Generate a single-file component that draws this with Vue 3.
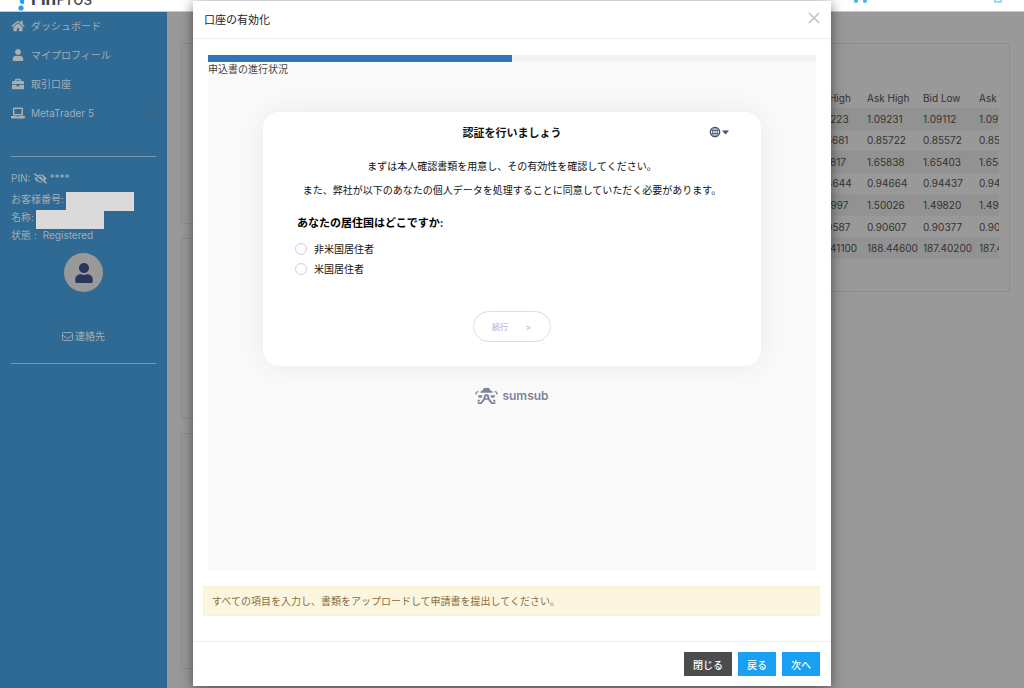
<script setup>
import { ref } from 'vue'

const navItems = [
  { label: 'ダッシュボード', icon: 'home' },
  { label: 'マイプロフィール', icon: 'user' },
  { label: '取引口座', icon: 'briefcase' },
  { label: 'MetaTrader 5', icon: 'laptop', more: true }
]

const columns = ['Bid High', 'Ask High', 'Bid Low', 'Ask Low']
const rates = [
  ['1.09223', '1.09231', '1.09112', '1.09121'],
  ['0.85681', '0.85722', '0.85572', '0.85583'],
  ['1.65817', '1.65838', '1.65403', '1.65442'],
  ['0.94644', '0.94664', '0.94437', '0.94452'],
  ['1.49997', '1.50026', '1.49820', '1.49818'],
  ['0.90587', '0.90607', '0.90377', '0.90392'],
  ['188.41100', '188.44600', '187.40200', '187.44000']
]

const progress = 50
const residence = ref('')
</script>

<template>
  <div class="page">
    <header class="topbar">
      <a class="logo" href="#" aria-label="FinPros">
        <svg class="logo-mark" width="12" height="18" viewBox="0 0 12 18" aria-hidden="true">
          <path d="M3 0h6l-1 10q-2 3-4-1z" fill="#1f9ff0" />
          <circle cx="5" cy="15" r="2.6" fill="#1f9ff0" />
        </svg>
        <span class="logo-text"><b>Fin</b>Pros</span>
      </a>
      <div class="top-icons">
        <svg width="16" height="14" viewBox="0 0 16 14" aria-hidden="true">
          <path d="M0 0h3l2 8h8l2-6H4" fill="none" stroke="#45b5ea" stroke-width="2" />
          <circle cx="3" cy="12" r="2" fill="#45b5ea" />
          <circle cx="12" cy="12" r="2" fill="#45b5ea" />
        </svg>
        <svg width="8" height="14" viewBox="0 0 8 14" aria-hidden="true">
          <rect x="1" y="1" width="6" height="12" fill="none" stroke="#45b5ea" />
        </svg>
      </div>
    </header>

    <div class="columns">
      <aside class="sidebar">
        <nav>
          <a v-for="item in navItems" :key="item.label" class="nav-link" href="#">
            <svg v-if="item.icon === 'home'" class="nav-icon" viewBox="0 0 576 512" aria-hidden="true"><path d="M280.37 148.26L96 300.11V464a16 16 0 0 0 16 16l112.06-.29a16 16 0 0 0 15.92-16V368a16 16 0 0 1 16-16h64a16 16 0 0 1 16 16v95.64a16 16 0 0 0 16 16.05L464 480a16 16 0 0 0 16-16V300L295.67 148.26a12.19 12.19 0 0 0-15.3 0zM571.6 251.47L488 182.56V44.05a12 12 0 0 0-12-12h-56a12 12 0 0 0-12 12v72.61L318.47 43a48 48 0 0 0-61 0L4.34 251.47a12 12 0 0 0-1.6 16.9l25.5 31A12 12 0 0 0 45.15 301l235.22-193.74a12.19 12.19 0 0 1 15.3 0L530.9 301a12 12 0 0 0 16.9-1.6l25.5-31a12 12 0 0 0-1.7-16.93z" /></svg>
            <svg v-else-if="item.icon === 'user'" class="nav-icon" viewBox="0 0 448 512" aria-hidden="true"><path d="M224 256c70.7 0 128-57.3 128-128S294.7 0 224 0 96 57.3 96 128s57.3 128 128 128zm89.6 32h-16.7c-22.2 10.2-46.9 16-72.9 16s-50.6-5.8-72.9-16h-16.7C60.2 288 0 348.2 0 422.4V464c0 26.5 21.5 48 48 48h352c26.5 0 48-21.5 48-48v-41.6c0-74.2-60.2-134.4-134.4-134.4z" /></svg>
            <svg v-else-if="item.icon === 'briefcase'" class="nav-icon" viewBox="0 0 512 512" aria-hidden="true"><path d="M320 336c0 8.84-7.16 16-16 16h-96c-8.84 0-16-7.16-16-16v-48H0v144c0 25.6 22.4 48 48 48h416c25.6 0 48-22.4 48-48V288H320v48zm144-208h-80V80c0-25.6-22.4-48-48-48H176c-25.6 0-48 22.4-48 48v48H48c-25.6 0-48 22.4-48 48v80h512v-80c0-25.6-22.4-48-48-48zm-144 0H192V96h128v32z" /></svg>
            <svg v-else class="nav-icon" viewBox="0 0 28 24" aria-hidden="true"><path fill-rule="evenodd" d="M6 1h16q2 0 2 2v14H4V3q0-2 2-2zm1 3v10h14V4zM0 18h10l1 1h6l1-1h10v2q0 3-2 3H2q-2 0-2-3z" /></svg>
            <span>{{ item.label }}</span>
            <svg v-if="item.more" class="nav-more" width="5" height="8" viewBox="0 0 5 8" aria-hidden="true"><path d="M4 1L1 4l3 3" fill="none" stroke="#4d5f72" stroke-width="2" /></svg>
          </a>
        </nav>

        <section class="account">
          <p class="pin">
            PIN:
            <svg width="13" height="11" viewBox="0 0 640 512" aria-hidden="true"><path d="M320 400c-75.85 0-137.25-58.71-142.9-133.11L72.2 185.82c-13.79 17.3-26.48 35.59-36.72 55.59a32.35 32.35 0 0 0 0 29.19C89.71 376.41 197.07 448 320 448c26.91 0 52.87-4 77.89-10.46L346 397.39a144.13 144.13 0 0 1-26 2.61zm313.82 58.1l-110.55-85.44a331.25 331.25 0 0 0 81.25-102.07 32.35 32.35 0 0 0 0-29.19C550.29 135.59 442.93 64 320 64a308.15 308.15 0 0 0-147.32 37.7L45.46 3.37A16 16 0 0 0 23 6.18L3.37 31.45A16 16 0 0 0 6.18 53.9l588.36 454.73a16 16 0 0 0 22.46-2.81l19.64-25.27a16 16 0 0 0-2.82-22.45zm-183.72-142l-39.3-30.38A94.75 94.75 0 0 0 416 256a94.76 94.76 0 0 0-121.31-92.21A47.65 47.65 0 0 1 304 192a46.64 46.64 0 0 1-1.54 10l-73.61-56.89A142.31 142.31 0 0 1 320 112a143.92 143.92 0 0 1 144 144c0 21.63-5.29 41.79-13.9 60.11z" /></svg>
            <span>****</span>
          </p>
          <p>お客様番号:<i class="mask"></i></p>
          <p>名称:<i class="mask"></i></p>
          <p class="status"><span>状態 :</span><span>Registered</span></p>
          <div class="avatar">
            <svg width="18" height="20" viewBox="0 0 448 512" aria-hidden="true"><path d="M224 256c70.7 0 128-57.3 128-128S294.7 0 224 0 96 57.3 96 128s57.3 128 128 128zm89.6 32h-16.7c-22.2 10.2-46.9 16-72.9 16s-50.6-5.8-72.9-16h-16.7C60.2 288 0 348.2 0 422.4V464c0 26.5 21.5 48 48 48h352c26.5 0 48-21.5 48-48v-41.6c0-74.2-60.2-134.4-134.4-134.4z" /></svg>
          </div>
          <a class="contact" href="#">
            <svg width="11" height="9" viewBox="0 0 22 18" fill="none" stroke="currentColor" stroke-width="1.8" aria-hidden="true"><rect x="1" y="1" width="20" height="16" rx="2" /><path d="M1 6l8 6q2 1.400 4 0l8-6" /></svg>
            連絡先
          </a>
        </section>
      </aside>

      <main class="board">
        <div class="stack">
          <div class="panel"></div>
          <div class="panel"></div>
          <div class="panel tall"></div>
        </div>
        <div class="panel rates">
          <div class="table-clip">
            <table>
              <thead>
                <tr><th v-for="c in columns" :key="c" scope="col">{{ c }}</th></tr>
              </thead>
              <tbody>
                <tr v-for="row in rates" :key="row[0]">
                  <td v-for="value in row" :key="value">{{ value }}</td>
                </tr>
              </tbody>
            </table>
          </div>
        </div>
      </main>
    </div>

    <div class="overlay">
      <div class="modal" role="dialog" aria-labelledby="modal-title">
        <div class="modal-header">
          <h2 id="modal-title">口座の有効化</h2>
          <button class="close" type="button" aria-label="閉じる">
            <svg width="12" height="12" viewBox="0 0 12 12" aria-hidden="true"><path d="M1 1l10 10M11 1L1 11" stroke="#c4c4c4" stroke-width="1.6" /></svg>
          </button>
        </div>

        <div class="modal-body">
          <div class="verification">
            <div class="progress"><div class="bar" :style="{ width: progress + '%' }"></div></div>
            <p class="progress-label">申込書の進行状況</p>

            <form class="card" @submit.prevent>
              <div class="card-head">
                <h3>認証を行いましょう</h3>
                <button class="language" type="button" aria-label="言語">
                  <svg width="20" height="12" viewBox="0 0 20 12" aria-hidden="true">
                    <g fill="none" stroke="#40516f"><circle cx="6" cy="6" r="4.700" stroke-width="1.300" /><ellipse cx="6" cy="6" rx="2.300" ry="4.700" /><path d="M1.500 4.400h9M1.500 7.600h9M6 1v10" stroke-width=".8" /></g>
                    <path d="M13 4.500h7L16.500 8.500z" fill="#40516f" />
                  </svg>
                </button>
              </div>
              <p class="intro">まずは本人確認書類を用意し、その有効性を確認してください。</p>
              <p class="intro">また、弊社が以下のあなたの個人データを処理することに同意していただく必要があります。</p>
              <fieldset>
                <legend>あなたの居住国はどこですか:</legend>
                <label><input v-model="residence" type="radio" name="residence" value="other" />非米国居住者</label>
                <label><input v-model="residence" type="radio" name="residence" value="us" />米国居住者</label>
              </fieldset>
              <button class="continue" type="submit" disabled><span>続行</span><span>&gt;</span></button>
            </form>

            <div class="brand">
              <svg width="23" height="18" viewBox="0 0 69 54" fill="#7d8595" aria-hidden="true">
                <path d="M24 9q1-7 6-7 4 2 9 0 5 0 6 7l8 5v3H16v-3z" />
                <path d="M0 20l5-7h6v3H7l-3 7zM69 20l-5-7h-6v3h4l3 7z" />
                <path d="M8 25h15l-3 7h-8zM46 25h15l-4 7h-8z" />
                <path d="M29 22h11l5 15 7 9h9v5H49L39 38h-9L20 51H8v-5h9l7-9zM33 28l-2 6h7l-2-6z" fill-rule="evenodd" />
                <path d="M8 38h9l-5 6H8zM52 38h9v6h-4z" />
              </svg>
              <span>sumsub</span>
            </div>
          </div>

          <p class="alert">すべての項目を入力し、書類をアップロードして申請書を提出してください。</p>
        </div>

        <div class="modal-footer">
          <button class="btn dark" type="button">閉じる</button>
          <button class="btn" type="button">戻る</button>
          <button class="btn" type="button">次へ</button>
        </div>
      </div>
    </div>
  </div>
</template>

<style>
body {
  margin: 0;
  background: #999;
}
</style>

<style scoped>
* {
  box-sizing: border-box;
}
h2, h3, p {
  margin: 0;
}
button {
  font-family: inherit;
}
.page {
  position: relative;
  display: flex;
  flex-direction: column;
  min-height: 100vh;
  font-family: Inter, "Noto Sans CJK JP", sans-serif;
  font-size: 10px;
  line-height: 18px;
  color: #333;
  overflow: hidden;
}
.topbar {
  height: 12px;
  display: flex;
  justify-content: space-between;
  align-items: flex-end;
  padding: 0 22px 0 16px;
  background: #fff;
  border-bottom: 1px solid #c8c8c8;
  overflow: hidden;
}
.logo {
  display: flex;
  align-items: flex-end;
  gap: 3px;
  color: #3c4350;
  text-decoration: none;
}
.logo-text {
  font-size: 17px;
  line-height: 20px;
  padding-bottom: 2px;
}
.top-icons {
  display: flex;
  gap: 125px;
  padding-bottom: 8px;
}
.columns {
  flex: 1;
  display: flex;
}
.sidebar {
  width: 167px;
  flex: none;
  padding: 0 11px;
  background: #2e6a94;
  color: #a3adb5;
}
nav {
  display: flex;
  flex-direction: column;
}
.nav-link {
  display: flex;
  align-items: center;
  gap: 6px;
  height: 29px;
  padding-bottom: 1px;
  color: inherit;
  text-decoration: none;
}
.nav-icon {
  width: 14px;
  height: 12px;
  fill: #a9aeb1;
}
.nav-more {
  margin-left: auto;
  margin-right: 4px;
}
.account {
  margin-top: 28px;
  padding-top: 12px;
  height: 208px;
  border-top: 1px solid #7f98aa;
  border-bottom: 1px solid #7f98aa;
}
.account p {
  display: flex;
  height: 18px;
}
.account .pin {
  align-items: center;
  gap: 3px;
  margin-bottom: 3px;
}
.account svg {
  fill: currentColor;
}
.mask {
  width: 68px;
  height: 19px;
  margin-top: 2px;
  margin-left: 2px;
  flex: none;
  background: #dadada;
}
.account .status {
  gap: 6px;
}
.avatar {
  display: flex;
  align-items: center;
  justify-content: center;
  width: 39px;
  height: 39px;
  margin: 9px auto 35px;
  border-radius: 50%;
  background: #999;
  color: #28365c;
}
.contact {
  display: flex;
  align-items: center;
  justify-content: center;
  gap: 2px;
  color: inherit;
  text-decoration: none;
}
.contact svg {
  fill: none;
}
.board {
  flex: 1;
  display: grid;
  grid-template-columns: 1fr 1fr;
  align-items: start;
  gap: 14px;
  padding: 31px 14px 0;
  background: #999;
}
.stack {
  display: flex;
  flex-direction: column;
  gap: 14px;
}
.panel {
  height: 181px;
  border: 1px solid #8d8d8d;
  border-radius: 2px;
}
.panel.tall {
  height: 236px;
}
.panel.rates {
  height: auto;
  padding: 44px 10px 32px;
}
.table-clip {
  width: 193px;
  margin-left: auto;
  overflow: hidden;
}
table {
  table-layout: fixed;
  width: 224px;
  height: 171px;
  border-collapse: collapse;
  color: #323232;
}
th, td {
  padding: 0 0 0 5px;
  text-align: left;
  font-weight: 400;
  line-height: 20px;
  white-space: nowrap;
}
tbody tr:nth-child(odd) {
  background: #929292;
}
.overlay {
  position: absolute;
  inset: 0;
  display: flex;
  justify-content: center;
  align-items: flex-start;
  padding-top: 1px;
  background: linear-gradient(#0000, #0000);
}
.modal {
  width: 100%;
  max-width: 638px;
  background: #fff;
  box-shadow: 0 2px 12px rgba(0, 0, 0, 0.5);
}
.modal-header {
  display: flex;
  align-items: center;
  justify-content: space-between;
  height: 38px;
  padding: 0 11px;
  border-bottom: 1px solid #eee;
}
.modal-header h2 {
  font-size: 11px;
  font-weight: 400;
  color: #222;
}
.close {
  display: flex;
  padding: 0 0 4px;
  border: 0;
  background: none;
}
.modal-body {
  padding: 16px 11px 25px 10px;
}
.verification {
  height: 516px;
  margin: 0 4px 0 5px;
  background: #fafafa;
}
.progress {
  height: 7px;
  background: #f3f3f3;
}
.bar {
  height: 100%;
  background: #2e76b8;
}
.progress-label {
  line-height: 14px;
  color: #444;
}
.card {
  display: flex;
  flex-direction: column;
  align-items: center;
  margin: 36px 55px 0;
  padding: 12px 32px 24px;
  border-radius: 16px;
  background: #fff;
  box-shadow: 0 0 32px rgba(0, 0, 0, 0.07);
  color: #111;
}
.card-head {
  width: 100%;
  display: grid;
  grid-template-columns: 1fr auto 1fr;
  align-items: center;
  margin-bottom: 12px;
}
.card-head h3 {
  grid-column: 2;
  font-size: 11px;
  font-weight: 700;
}
.language {
  justify-self: end;
  display: flex;
  padding: 0 0 2px;
  border: 0;
  background: none;
}
.intro {
  line-height: 24px;
  text-align: center;
}
fieldset {
  align-self: stretch;
  display: flex;
  flex-direction: column;
  margin: 12px 0 32px;
  padding: 0;
  border: 0;
}
legend {
  padding: 0 0 7px 2px;
  font-size: 11px;
  font-weight: 700;
  color: #000;
}
label {
  display: flex;
  align-items: center;
  gap: 7px;
  height: 20px;
}
input {
  appearance: none;
  width: 12px;
  height: 12px;
  margin: 0;
  border: 1px solid #cfcbec;
  border-radius: 50%;
  background: #fff;
}
input:checked {
  border-width: 4px;
}
.continue {
  display: flex;
  align-items: center;
  justify-content: space-between;
  width: 78px;
  height: 31px;
  padding: 0 19px 0 18px;
  border: 1px solid #dddaee;
  border-radius: 16px;
  background: #fff;
  color: #c9c5e6;
  font-size: 8px;
  font-weight: 700;
}
.brand {
  display: flex;
  align-items: center;
  justify-content: center;
  gap: 4px;
  margin-top: 21px;
  color: #7d8595;
  font-size: 12px;
  font-weight: 600;
}
.alert {
  margin-top: 15px;
  padding: 5px 8px;
  border: 1px solid #faf0d4;
  background: #fcf6e1;
  color: #8a6d3b;
}
.modal-footer {
  display: flex;
  justify-content: flex-end;
  gap: 6px;
  padding: 10px 11px;
  border-top: 1px solid #eee;
}
.btn {
  height: 24px;
  padding: 0 9px;
  border: 0;
  background: #1aa0f2;
  color: #fff;
  font-size: 10px;
  font-weight: 500;
}
.btn.dark {
  background: #4c4c4c;
}
</style>
